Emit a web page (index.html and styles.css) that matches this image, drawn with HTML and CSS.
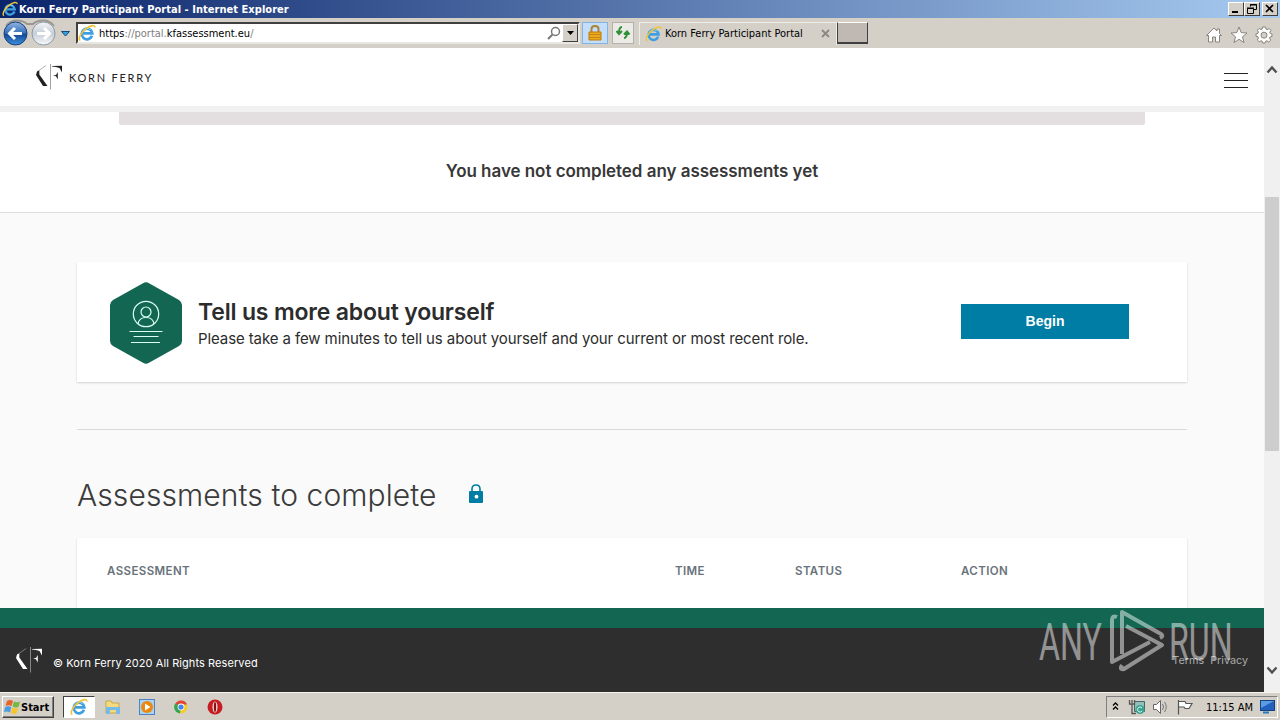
FILE: index.html
```
<!DOCTYPE html>
<html lang="en">
<head>
    <meta charset="UTF-8">
    <meta name="viewport" content="width=device-width, initial-scale=1.0">
    <title>Korn Ferry Participant Portal</title>
    <link rel="stylesheet" href="styles.css">
</head>
<body>
    <svg class="sprite" width="0" height="0">
        <symbol id="ie" viewBox="0 0 18 18">
            <path d="M14 11.800A5.300 5.300 0 1 1 14.300 9.400H5" fill="none" stroke="#3f9fe0" stroke-width="2.700"/>
            <path d="M4.500 7.500A5.200 5.200 0 0 1 12.500 5.500" fill="none" stroke="#8fd2f6" stroke-width="1"/>
            <path d="M2.200 16.600C-.6 14.500 3.600 7.500 9 4C13 1.200 17 .6 17 3.500" fill="none" stroke="#f0c435" stroke-width="1.600"/>
        </symbol>
        <symbol id="kf" viewBox="0 0 28 28">
            <path d="M2 9L11 2.500" stroke="currentColor" stroke-width=".6" opacity=".6"/>
            <path d="M2 8.500L1 12L8 23H12.500L4.300 11.500V7.500Z" fill="currentColor"/>
            <path d="M15.500 1V26.500" stroke="currentColor" stroke-width=".7" opacity=".6"/>
            <path d="M17 3L27 2.800V9.500L24.500 5Q21 3.500 17 3.500Z" fill="currentColor"/>
            <path d="M18 12.500L21 12L22.800 9V16.500L21 13.200Z" fill="currentColor"/>
        </symbol>
    </svg>

    <div class="title-bar">
        <svg class="title-icon"><use href="#ie"/></svg>
        <span class="title-text">Korn Ferry Participant Portal - Internet Explorer</span>
        <div class="window-btns">
            <span class="win-btn"><svg width="14" height="12"><path d="M3 9h6" stroke="#000" stroke-width="2"/></svg></span>
            <span class="win-btn"><svg width="14" height="12"><path d="M5.500 3.500V1.500H11.500V6.500H9M5 2H12M2.500 5.500H8.500V10.500H2.500ZM2 5H9" fill="none" stroke="#000"/></svg></span>
            <span class="win-btn close"><svg width="14" height="12"><path d="M3 2L10 9M10 2L3 9" stroke="#000" stroke-width="1.700"/></svg></span>
        </div>
    </div>

    <div class="toolbar">
        <svg class="nav-buttons" width="74" height="30" viewBox="0 0 74 30">
            <defs>
                <linearGradient id="back" x2="0" y2="1"><stop stop-color="#91b5e3"/><stop offset=".45" stop-color="#3c75bd"/><stop offset=".55" stop-color="#174b99"/><stop offset="1" stop-color="#3d91da"/></linearGradient>
                <linearGradient id="fwd" x2="0" y2="1"><stop stop-color="#f5f7f9"/><stop offset=".5" stop-color="#c5cdd5"/><stop offset="1" stop-color="#f7fafc"/></linearGradient>
            </defs>
            <path d="M6 8Q10 2.500 17 2.500Q23 2.500 27 6H33Q37 2.500 43 2.500Q50 2.500 54 8" fill="none" stroke="#9a9791" stroke-width="2"/>
            <circle cx="15.500" cy="15.500" r="11.500" fill="url(#back)" stroke="#173e7b"/>
            <path d="M9 15.500H22M15 10L9.500 15.500L15 21" fill="none" stroke="#fff" stroke-width="3"/>
            <circle cx="43.500" cy="15.500" r="11.500" fill="url(#fwd)" stroke="#8b98a8"/>
            <path d="M37 15.500H49M44 10L49.500 15.500L44 21" fill="none" stroke="#fff" stroke-width="3"/>
            <path d="M61.500 13.500H69.500L65.500 18Z" fill="#38a0dc" stroke="#124c83"/>
        </svg>
        <div class="address">
            <svg width="18" height="18"><use href="#ie"/></svg>
            <span class="url">https<i>://portal.</i>kfassessment.eu<i>/</i></span>
            <svg class="search" width="16" height="16"><circle cx="9.500" cy="6.500" r="4" fill="none" stroke="#777" stroke-width="1.500"/><path d="M6.500 9.500L2 14" stroke="#777" stroke-width="2"/></svg>
            <span class="drop"><svg width="7" height="4"><path d="M0 0H7L3.500 4Z"/></svg></span>
        </div>
        <span class="tool lock-btn">
            <svg width="16" height="18"><path d="M4.500 8V5Q4.500 2 8 2T11.500 5V8" fill="none" stroke="#a88536" stroke-width="2"/><path d="M2 8H14V16H2Z" fill="#eba91c" stroke="#bd7b08"/><path d="M2 10.500H14M2 13.500H14" stroke="#c58714"/></svg>
        </span>
        <span class="tool refresh-btn">
            <svg width="16" height="16"><path d="M7 2Q4 2 4 8M1.500 6L4 9L7 6M9 13Q12 13 12 7M9 9.500L12 6.500L14.500 9.500" fill="none" stroke="#2d9136" stroke-width="2"/></svg>
        </span>
        <div class="tab">
            <svg width="17" height="18"><use href="#ie"/></svg>
            <span class="tab-text">Korn Ferry Participant Portal</span>
            <svg class="tab-close" width="9" height="9"><path d="M1 1L8 8M8 1L1 8" stroke="#8b8884" stroke-width="1.800"/></svg>
        </div>
        <span class="new-tab"></span>
        <div class="browser-tools">
            <svg width="18" height="18" viewBox="0 0 18 18"><path d="M1.500 9.500L9 2L12 5V3H14.500V7.500L16.500 9.500H14.500V16H10.500V11H7.500V16H3.500V9.500Z"/></svg>
            <svg width="18" height="18" viewBox="0 0 18 18"><path d="M9 1L11.200 6.600L17 7L12.500 10.800L14 16.500L9 13.300L4 16.500L5.500 10.800L1 7L6.800 6.600Z"/></svg>
            <svg width="18" height="18" viewBox="0 0 18 18"><path d="M7.500 1H10.500L11 3.200L12.200 3.700L14.200 2.500L16 4.500L14.700 6.300L15.200 7.500L17 8V10.500L15 11L14.500 12.200L15.700 14.200L13.800 16L12 14.800L10.700 15.200L10.200 17H7.700L7.200 15.200L6 14.700L4.200 15.800L2.300 14L3.400 12L3 10.800L1 10.300V7.800L3 7.300L3.500 6L2.400 4.200L4.200 2.400L6 3.600L7.200 3.100Z"/><circle cx="9" cy="9.200" r="3" fill="#d4d0c8"/></svg>
        </div>
    </div>

    <div class="viewport">
        <main class="page">
            <header class="header">
                <a href="#" class="logo"><svg width="28" height="28"><use href="#kf"/></svg><span>KORN FERRY</span></a>
                <div class="menu"><span></span><span></span><span></span></div>
            </header>

            <section class="summary">
                <div class="progress"></div>
                <h3>You have not completed any assessments yet</h3>
            </section>

            <section class="content">
                <div class="card about">
                    <svg class="badge" width="72" height="82" viewBox="0 0 72 82">
                        <path d="M33 1.200Q36 -.5 39 1.200L69 18Q72 20 72 23V59Q72 62 69 64L39 80.800Q36 82.500 33 80.800L3 64Q0 62 0 59V23Q0 20 3 18Z" fill="#126652"/>
                        <g fill="none" stroke="#d9fff3" stroke-width="1.200">
                            <circle cx="36" cy="32" r="12.700"/>
                            <circle cx="36" cy="30" r="5"/>
                            <path d="M28 42Q29 35.500 36 35.500T44 42"/>
                            <path d="M19.500 49.500H52.500M23.500 54.500H48.500M21 60.500H50"/>
                        </g>
                    </svg>
                    <div class="about-text">
                        <h2>Tell us more about yourself</h2>
                        <p>Please take a few minutes to tell us about yourself and your current or most recent role.</p>
                    </div>
                    <button class="begin">Begin</button>
                </div>

                <div class="section-title">
                    <h1>Assessments to complete</h1>
                    <svg width="14" height="20" viewBox="0 0 14 20"><path d="M3 8V5Q3 1 7 1T11 5V8" fill="none" stroke="#007da4" stroke-width="1.600"/><rect y="7" width="14" height="12" rx="1" fill="#007da4"/><circle cx="7.500" cy="12.700" r="1.900" fill="#fff"/></svg>
                </div>

                <div class="card table-head">
                    <span>ASSESSMENT</span>
                    <span>TIME</span>
                    <span>STATUS</span>
                    <span>ACTION</span>
                </div>
            </section>

            <footer class="footer">
                <svg width="28" height="28"><use href="#kf"/></svg>
                <span class="copyright">© Korn Ferry 2020 All Rights Reserved</span>
                <nav class="legal"><a href="#">Terms</a><a href="#">Privacy</a></nav>
            </footer>

            <div class="watermark">
                <span class="mark-text any">ANY</span>
                <svg width="58" height="64" viewBox="0 0 58 64">
                    <path d="M9 8Q4 6 4 11V53L42 33M14 45V3L53 25Q56 27 52 29M18 17L54 36L16 60Q11 61 14 56" fill="none" stroke="currentColor" stroke-width="4" stroke-linejoin="round"/>
                </svg>
                <span class="mark-text run">RUN</span>
            </div>
        </main>
        <div class="scrollbar">
            <svg width="12" height="9"><path d="M1.500 7.500L6 2.500L10.500 7.500" fill="none" stroke="#505050" stroke-width="2.400"/></svg>
            <div class="thumb"></div>
            <svg width="12" height="9"><path d="M1.500 1.500L6 6.500L10.500 1.500" fill="none" stroke="#505050" stroke-width="2.400"/></svg>
        </div>
    </div>

    <div class="taskbar">
        <div class="start">
            <svg width="17" height="16" viewBox="0 0 17 16"><path d="M3 2Q6 0 9 2L7.500 7Q4.500 5.500 1.500 7Z" fill="#e9642b"/><path d="M10 2.500Q13 4 16 2.500L14.500 8Q11.500 9 8.500 7.500Z" fill="#75b843"/><path d="M1.200 8Q4 6.500 7.200 8L6 13.500Q3 12 0 13Z" fill="#4a9be0"/><path d="M8.200 8.500Q11 10 14.200 9L12.500 14.500Q10 15.500 7 14Z" fill="#f5c52b"/></svg>
            <span>Start</span>
        </div>
        <div class="task-items">
            <span class="task active"><svg width="18" height="18"><use href="#ie"/></svg></span>
            <span class="task"><svg width="18" height="18"><path d="M2 3H7L8 5H15V15H2Z" fill="#f4db7d" stroke="#c9a948"/><path d="M2 9H16V16H12V12H6V16H2Z" fill="#74bce7"/></svg></span>
            <span class="task"><svg width="18" height="18"><rect x="1.500" y="1.500" width="15" height="15" fill="#a7d4f4" stroke="#4b83c6"/><circle cx="9" cy="9" r="6" fill="#ed870f"/><path d="M7 5.500L12.500 9L7 12.500Z" fill="#fff"/></svg></span>
            <span class="task"><svg width="18" height="18"><circle cx="9" cy="9" r="6.500" fill="#f5cc28"/><path d="M9 9L3.200 6A6.500 6.500 0 0 1 15 6.500H9Z" fill="#dd4536"/><path d="M9 9L8 15.500A6.500 6.500 0 0 1 3.200 5.500Z" fill="#35a552"/><circle cx="9" cy="9" r="3.400" fill="#fff"/><circle cx="9" cy="9" r="2.600" fill="#4785e8"/></svg></span>
            <span class="task"><svg width="18" height="18"><circle cx="9" cy="9" r="7.500" fill="#c71c20"/><ellipse cx="9" cy="9" rx="2.500" ry="5.500" fill="#f4e9e6"/><ellipse cx="9" cy="9" rx="1.200" ry="5" fill="#8b1010"/></svg></span>
        </div>
        <div class="tray">
            <svg width="8" height="10"><path d="M1 3.500L3.500 1L6 3.500M1 7.500L3.500 5L6 7.500" fill="none" stroke="#000" stroke-width="1.300"/></svg>
            <svg width="18" height="16"><path d="M6.500 2.500H16.500V12.500H6.500Z" fill="#93bfb8" stroke="#466"/><path d="M1.500 1V5H6.500V1M4 1V4M4 5V14.500H8" fill="none" stroke="#555" stroke-width="1.300"/><circle cx="12" cy="10.500" r="4.500" fill="#3ca18e"/><path d="M14 9A2.500 2.500 0 1 0 14 12" fill="none" stroke="#dff"/></svg>
            <svg width="18" height="16"><path d="M1.500 5.500H4.500L8.500 1.500V14.500L4.500 10.500H1.500Z" fill="#fff" stroke="#666"/><path d="M10.500 5Q12.500 8 10.500 11M12.500 3Q16 8 12.500 13" fill="none" stroke="#777"/></svg>
            <svg width="18" height="16"><path d="M2.500 1V15.500M3 2.500H9L10 4.500H16L13 9.500H9L8 8H3" fill="#fff" stroke="#555" stroke-width="1.200"/></svg>
            <span class="clock">11:15 AM</span>
            <svg width="16" height="16"><rect x="1.500" y="1.500" width="14" height="10" fill="#2260bd" stroke="#144283"/><path d="M2 2H15L2 9Z" fill="#5d9be2"/><path d="M4 13.500H10" stroke="#287ac0" stroke-width="2"/></svg>
        </div>
    </div>
</body>
</html>
```
FILE: styles.css
```
:root {
    --chrome: #d4d0c8;
    --green: #126652;
    --blue: #007da4;
    --dark: #2e2e2e;
    --ui-font: 'DejaVu Sans Condensed', 'DejaVu Sans', sans-serif;
}

* {
    margin: 0;
    padding: 0;
    box-sizing: border-box;
}

body {
    width: 1280px;
    height: 720px;
    display: flex;
    flex-direction: column;
    overflow: hidden;
    font-family: 'Inter', sans-serif;
    color: #2c2c2c;
}

svg {
    display: block;
    flex: none;
}

.sprite {
    position: absolute;
}

/* Window chrome */
.title-bar {
    height: 18px;
    flex: none;
    display: flex;
    align-items: center;
    padding: 0 2px;
    background: linear-gradient(90deg, #0a246a, #a6caf0);
}

.title-icon {
    width: 16px;
    height: 16px;
}

.title-text {
    margin-left: 1px;
    padding-top: 1px;
    color: #fff;
    font: bold 11px/17px var(--ui-font);
    letter-spacing: 0.04px;
    white-space: nowrap;
}

.window-btns {
    margin-left: auto;
    display: flex;
}

.win-btn {
    width: 16px;
    height: 14px;
    background: var(--chrome);
    border: 1px solid;
    border-color: #fff #404040 #404040 #fff;
}

.win-btn.close {
    margin-left: 2px;
}

.toolbar {
    height: 30px;
    flex: none;
    display: flex;
    align-items: center;
    background: var(--chrome);
}

.address {
    width: 504px;
    height: 22px;
    margin-left: 2px;
    display: flex;
    align-items: center;
    background: #fff;
    border: 2px solid;
    border-color: #404040 #e8e6e1 #e8e6e1 #404040;
}

.url {
    margin-left: 3px;
    padding-top: 2px;
    font: 11px/18px var(--ui-font);
    color: #000;
}

.url i {
    font-style: normal;
    color: #808080;
}

.search {
    margin-left: auto;
}

.drop {
    width: 16px;
    height: 18px;
    display: flex;
    align-items: center;
    justify-content: center;
    background: var(--chrome);
    border: 1px solid;
    border-color: #fff #404040 #404040 #fff;
}

.tool {
    display: flex;
    align-items: center;
    justify-content: center;
    height: 22px;
}

.lock-btn {
    width: 26px;
    margin-left: 2px;
    background: #c4ddf8;
    border: 1px solid #82b3e5;
}

.refresh-btn {
    width: 22px;
    margin-left: 4px;
    background: #eceae6;
    border: 1px solid #b5b2ac;
}

.tab {
    width: 198px;
    height: 23px;
    margin-left: 5px;
    padding: 0 6px 0 5px;
    display: flex;
    align-items: center;
    border: 1px solid #efede8;
    border-bottom: 0;
}

.tab-text {
    margin-left: 3px;
    padding-top: 1px;
    font: 11px/20px var(--ui-font);
    color: #000;
    white-space: nowrap;
}

.tab-close {
    margin-left: auto;
}

.new-tab {
    width: 31px;
    height: 22px;
    background: #c0b9b3;
    border: 1px solid;
    border-color: #fff #404040 #404040 #404040;
    border-bottom-width: 2px;
}

.browser-tools {
    margin-left: auto;
    padding: 3px 7px 0 0;
    display: flex;
    gap: 7px;
    fill: #fff;
    stroke: #88847e;
}

/* Page */
.viewport {
    flex: 1;
    display: flex;
    min-height: 0;
}

.page {
    position: relative;
    width: 1264px;
    display: flex;
    flex-direction: column;
    background: #fafafa;
}

.header {
    height: 64px;
    flex: none;
    padding: 0 16px 0 35px;
    display: flex;
    justify-content: space-between;
    align-items: center;
    background: #fff;
    border-bottom: 6px solid #f1f1f1;
}

.logo {
    display: flex;
    align-items: center;
    gap: 6px;
    color: #222;
    text-decoration: none;
    font: 11px 'Lato', sans-serif;
    letter-spacing: 1.75px;
}

.menu {
    display: flex;
    flex-direction: column;
    gap: 6px;
    padding-top: 7px;
}

.menu span {
    width: 24px;
    height: 1px;
    background: #222;
}

.summary {
    height: 101px;
    flex: none;
    padding: 0 119px;
    background: #fff;
    border-bottom: 1px solid #dedede;
    text-align: center;
}

.progress {
    height: 13px;
    background: #e3dfe0;
    border-radius: 0 0 2px 2px;
}

.summary h3 {
    margin-top: 34px;
    font-size: 17px;
    line-height: 24px;
    font-weight: 600;
    letter-spacing: -0.04px;
    color: #383838;
}

.content {
    flex: 1;
    min-height: 0;
    padding: 49px 77px 0;
}

.card {
    background: #fff;
    box-shadow: 0 1px 2px rgba(0, 0, 0, 0.16);
}

.about {
    height: 120px;
    padding: 0 58px 0 33px;
    display: flex;
    align-items: center;
}

.badge {
    margin-top: 1px;
}

.about-text {
    margin-left: 16px;
    padding-top: 6px;
    white-space: nowrap;
}

.about-text h2 {
    font-size: 23px;
    line-height: 27px;
    font-weight: 600;
    letter-spacing: -0.18px;
}

.about-text p {
    font-size: 15px;
    line-height: 26px;
    letter-spacing: -0.1px;
}

.begin {
    width: 168px;
    height: 35px;
    margin: 0 0 2px auto;
    background: var(--blue);
    border: none;
    color: #fff;
    font: bold 14px 'Liberation Sans', sans-serif;
}

.section-title {
    height: 109px;
    margin-top: 47px;
    padding-top: 45px;
    display: flex;
    align-items: flex-start;
    gap: 32px;
    border-top: 1px solid #d9d9d9;
    color: #3b3b3b;
}

.section-title h1 {
    font-size: 30px;
    line-height: 40px;
    font-weight: 300;
    letter-spacing: 0.09px;
    white-space: nowrap;
}

.section-title svg {
    margin-top: 9px;
}

.table-head {
    height: 70px;
    padding: 24px 30px;
    display: grid;
    grid-template-columns: 568px 120px 166px 1fr;
    color: #69727b;
    font-size: 11.5px;
    line-height: 18px;
    font-weight: 600;
    letter-spacing: 0.4px;
}

.footer {
    height: 84px;
    flex: none;
    padding: 5px 16px 0 15px;
    display: flex;
    align-items: center;
    background: var(--dark);
    border-top: 20px solid var(--green);
    color: #fff;
}

.footer svg {
    margin-top: -6px;
}

.copyright {
    margin-left: 10px;
    font-size: 11px;
    letter-spacing: 0.08px;
}

.legal {
    margin: 0 0 4px auto;
    display: flex;
    gap: 6px;
    font-size: 10.8px;
}

.legal a {
    color: #aaa;
    text-decoration: none;
}

.watermark {
    position: absolute;
    left: 1039px;
    top: 561px;
    width: 194px;
    height: 64px;
    display: flex;
    align-items: center;
    color: #fff;
    opacity: 0.48;
}

.mark-text {
    padding-top: 3px;
    font: 400 51px/60px 'Roboto', sans-serif;
    transform: scaleX(0.63);
    transform-origin: left;
}

.any {
    width: 69px;
}

.run {
    width: 62px;
    margin-left: 3px;
}

.scrollbar {
    width: 16px;
    padding: 17px 0 17px;
    display: flex;
    flex-direction: column;
    align-items: center;
    background: #f0f0f0;
}

.thumb {
    width: 14px;
    height: 254px;
    margin: 123px 0 auto;
    background: #cdcdcd;
}

/* Taskbar */
.taskbar {
    height: 28px;
    flex: none;
    padding: 3px 2px 0;
    display: flex;
    background: var(--chrome);
    border-top: 1px solid #f5f3ef;
}

.start {
    width: 52px;
    height: 22px;
    padding-left: 1px;
    display: flex;
    align-items: center;
    border: 1px solid;
    border-color: #fff #404040 #404040 #fff;
    box-shadow: inset -1px -1px #808080;
    font: bold 11px var(--ui-font);
    color: #000;
}

.task-items {
    margin-left: 9px;
    display: flex;
    gap: 2px;
}

.task {
    width: 32px;
    height: 22px;
    display: flex;
    align-items: center;
    justify-content: center;
}

.task.active {
    background: #fff;
    border: 1px solid;
    border-color: #404040 #fff #fff #404040;
}

.tray {
    width: 172px;
    height: 22px;
    margin-left: auto;
    padding: 0 2px 0 5px;
    display: flex;
    align-items: center;
    gap: 6px;
    border: 1px solid;
    border-color: #808080 #fff #fff #808080;
}

.tray svg:nth-child(2) {
    margin-left: 2px;
}

.clock {
    margin-left: auto;
    font: 11px var(--ui-font);
    color: #000;
    white-space: nowrap;
}
```
